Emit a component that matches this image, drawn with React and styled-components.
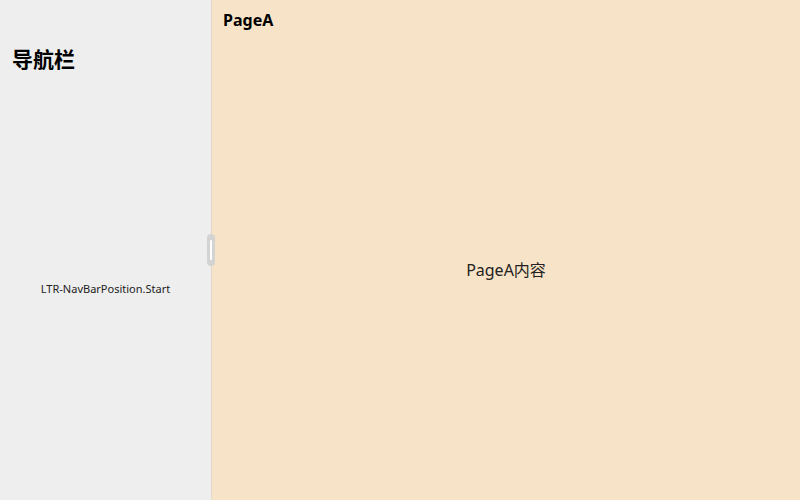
import React from 'react';
import styled, { createGlobalStyle } from 'styled-components';

const GlobalStyle = createGlobalStyle`
  html, body {
    margin: 0;
    padding: 0;
  }
  body {
    font-family: "Noto Sans", "Noto Sans CJK SC", sans-serif;
    color: #182431;
  }
`;

const Layout = styled.div`
  display: flex;
  width: 800px;
  height: 500px;
  overflow: hidden;
`;

const NavBar = styled.div`
  display: flex;
  flex-direction: column;
  width: 211px;
  background: #eeeeee;
`;

const NavTitle = styled.div`
  height: 76px;
  box-sizing: border-box;
  padding: 43px 0 0 12px;
  font-family: "Noto Sans CJK SC", sans-serif;
  font-size: 21px;
  font-weight: 700;
  line-height: 30px;
  color: #000;
`;

const NavBody = styled.div`
  flex: 1;
  display: flex;
  align-items: center;
  justify-content: center;
  font-size: 11px;
  color: #222;
`;

const Divider = styled.div`
  position: relative;
  width: 1px;
  background: #e3d8c9;
`;

const Handle = styled.div`
  position: absolute;
  left: -4px;
  top: 234px;
  width: 8px;
  height: 32px;
  border-radius: 4px;
  background: #d3d3d1;
  display: flex;
  align-items: center;
  justify-content: center;

  &::after {
    content: '';
    width: 2px;
    height: 20px;
    border-radius: 1px;
    background: #ffffff;
  }
`;

const Page = styled.div`
  flex: 1;
  display: flex;
  flex-direction: column;
  background: #f7e3c7;
`;

const PageTitle = styled.div`
  height: 38px;
  box-sizing: border-box;
  padding: 8px 0 0 11px;
  font-size: 16px;
  font-weight: 700;
  line-height: 24px;
  color: #000;
`;

const PageBody = styled.div`
  flex: 1;
  display: flex;
  align-items: center;
  justify-content: center;
  font-size: 16px;
  color: #222;
`;

export default function App() {
  return (
    <>
      <GlobalStyle />
      <Layout>
        <NavBar>
          <NavTitle>导航栏</NavTitle>
          <NavBody>LTR-NavBarPosition.Start</NavBody>
        </NavBar>
        <Divider>
          <Handle />
        </Divider>
        <Page>
          <PageTitle>PageA</PageTitle>
          <PageBody>PageA内容</PageBody>
        </Page>
      </Layout>
    </>
  );
}
